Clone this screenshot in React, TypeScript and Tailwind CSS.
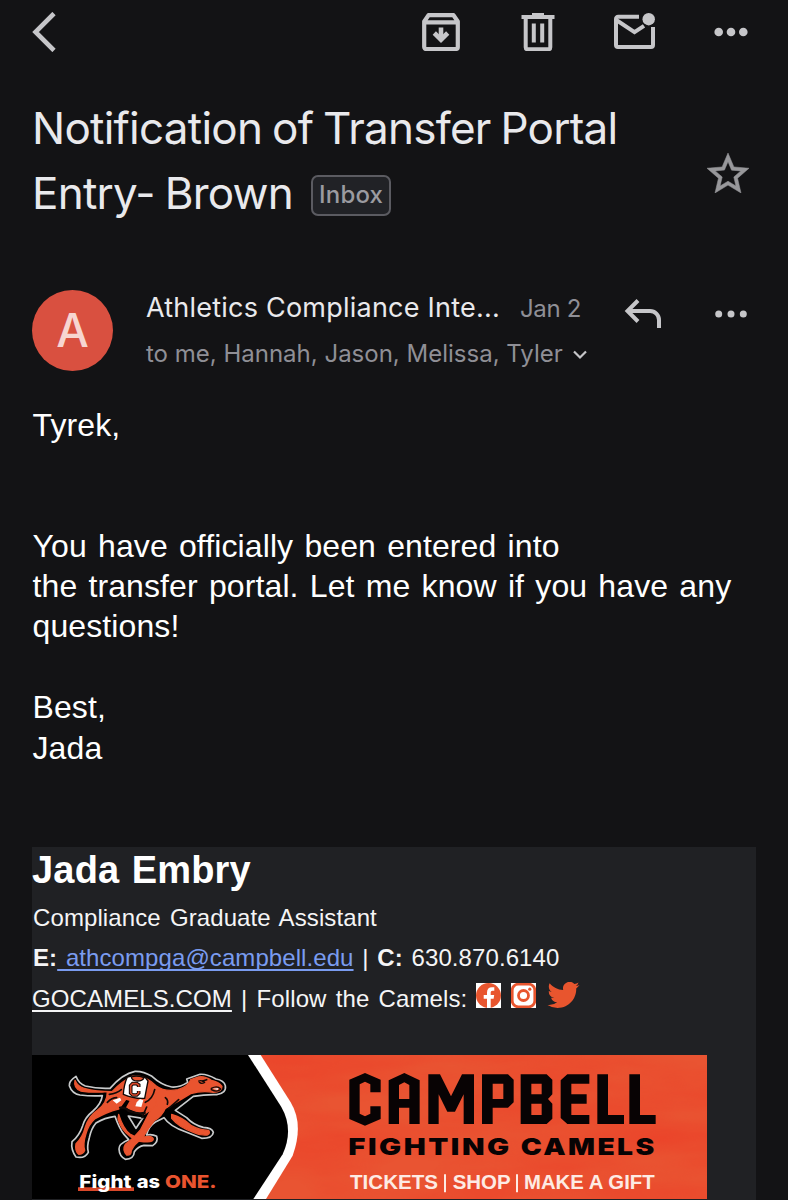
import type { ReactNode } from "react";

const HELVETICA = "font-['Liberation_Sans',Arial,sans-serif]";

const bodyLines = [
    "Tyrek,",
    "",
    "",
    "You have officially been entered into",
    "the transfer portal. Let me know if you have any",
    "questions!",
    "",
    "Best,",
    "Jada",
];

function Icon({ className, viewBox, children }: { className: string; viewBox: string; children: ReactNode }) {
    return (
        <svg className={`block shrink-0 ${className}`} viewBox={viewBox} fill="none" stroke="currentColor">
            {children}
        </svg>
    );
}

function Dots({ r }: { r: number }) {
    return (
        <Icon className="w-[34px] h-[10px]" viewBox="0 0 34 10">
            <g fill="currentColor" stroke="none">
                <circle cx="4.7" cy="5" r={r} />
                <circle cx="17" cy="5" r={r} />
                <circle cx="29.3" cy="5" r={r} />
            </g>
        </Icon>
    );
}

function Toolbar() {
    return (
        <header className="flex items-center h-16 pl-8 pr-[40px] text-[#c6c6c9]">
            <button aria-label="Back">
                <Icon className="w-6 h-10" viewBox="0 0 24 40">
                    <path d="M22 1.500 3.500 20 22 38.500" strokeWidth="4.600" />
                </Icon>
            </button>
            <div className="flex items-center ml-auto">
                <button aria-label="Archive">
                    <Icon className="w-[38px] h-[38px]" viewBox="0 0 38 38">
                        <path d="M2.200 8.500 6.500 2.200h25l4.300 6.300V34a2 2 0 0 1-2 2H4.200a2 2 0 0 1-2-2zM2 9.300h34" strokeWidth="4.200" strokeLinejoin="round" />
                        <path d="M19 14.500v11" strokeWidth="4.600" />
                        <path d="m12.300 20 6.700 6.700 6.700-6.700" strokeWidth="4.600" />
                    </Icon>
                </button>
                <button aria-label="Delete" className="ml-[61px]">
                    <Icon className="w-[34px] h-[38px]" viewBox="0 0 34 38">
                        <path d="M0.500 4h33M11 2h12" strokeWidth="4" />
                        <path d="M4.700 5v29.300a2 2 0 0 0 2 2h20.600a2 2 0 0 0 2-2V5" strokeWidth="4" />
                        <path d="M12.800 10.500v19M21.200 10.500v19" strokeWidth="4" />
                    </Icon>
                </button>
                <button aria-label="Mark unread" className="ml-[59px]">
                    <Icon className="w-[42px] h-[38px]" viewBox="0 2 42 38">
                        <path d="M25 5.800H4.200A2.200 2.200 0 0 0 2 8v26a2 2 0 0 0 2 2h33a2 2 0 0 0 2-2V16" strokeWidth="4" />
                        <path d="m3 9.500 17.500 11.700 9.500-6.400" strokeWidth="4" />
                        <circle cx="34.700" cy="8.200" r="6.200" fill="currentColor" stroke="none" />
                    </Icon>
                </button>
                <button aria-label="More" className="ml-[58px]">
                    <Dots r={4.3} />
                </button>
            </div>
        </header>
    );
}

function Subject() {
    return (
        <div className="flex items-center mt-8 pl-8 pr-[39px]">
            <h1 className="flex-1 font-[Inter,sans-serif] text-[44px] leading-[65px] tracking-[-0.75px] [word-spacing:-1.8px] text-[#e9e9ec] whitespace-nowrap">
                Notification of Transfer Portal
                <br />
                <span className="flex items-center">
                    Entry- Brown
                    <span className="flex items-center justify-center w-20 h-[41px] ml-[18px] mt-[3px] rounded-[7px] border-2 border-[#5b5b61] bg-[#212226] text-[24px] leading-none font-medium tracking-[0.2px] text-[#9b9ba0]">
                        Inbox
                    </span>
                </span>
            </h1>
            <button aria-label="Star" className="mt-[23px] text-[#98989b]">
                <Icon className="w-[42px] h-10" viewBox="2 2 20 19">
                    <path
                        d="M22 9.240l-7.190-.62L12 2 9.190 8.630 2 9.240l5.460 4.730L5.820 21 12 17.270 18.180 21l-1.630-7.030L22 9.240zM12 15.400l-3.760 2.270 1-4.280-3.320-2.880 4.380-.38L12 6.100l1.710 4.040 4.380.38-3.320 2.880 1 4.280L12 15.400z"
                        fill="currentColor"
                        stroke="currentColor"
                        strokeWidth="0.25"
                    />
                </Icon>
            </button>
        </div>
    );
}

function Sender() {
    return (
        <div className="flex h-[85px] mt-[62px] pl-8 pr-10 font-[Inter,sans-serif]">
            <div className="flex items-center justify-center size-[81px] mt-[1.500px] rounded-full bg-[#d95040] text-[#f7d5d1] text-[46px] leading-none font-medium">
                A
            </div>
            <div className="ml-[33px] pt-px whitespace-nowrap">
                <div className="flex items-baseline h-[38px] leading-[38px]">
                    <span className="text-[27px] tracking-[0.22px] text-[#e9e9ec]">Athletics Compliance Inte...</span>
                    <span className="ml-5 text-[24px] tracking-[-0.3px] text-[#8f8f96]">Jan 2</span>
                </div>
                <div className="flex items-center mt-2 h-[38px] leading-[38px] text-[24px] text-[#8f8f96]">
                    to me, Hannah, Jason, Melissa, Tyler
                    <Icon className="w-[14px] h-[10px] ml-[10px] mt-0.5 text-[#c6c6c9]" viewBox="0 0 14 10">
                        <path d="m1 1.500 6 6 6-6" strokeWidth="2.200" />
                    </Icon>
                </div>
            </div>
            <div className="flex items-center h-[51px] ml-auto text-[#c6c6c9]">
                <button aria-label="Reply">
                    <Icon className="w-[38px] h-[30px]" viewBox="0 0 38 30">
                        <path d="M14 1.500 3.500 12 14 22.500M4 12h22a9 9 0 0 1 9 9v8" strokeWidth="4" />
                    </Icon>
                </button>
                <button aria-label="More" className="ml-[52px]">
                    <Dots r={3.5} />
                </button>
            </div>
        </div>
    );
}

function SocialIcons() {
    return (
        <span className="flex items-center ml-[9px] mb-[7px]">
            <Icon className="w-[25px] h-[25px] bg-white" viewBox="0 0 25 25">
                <circle cx="12.500" cy="12.500" r="12.500" fill="#e8552e" stroke="none" />
                <path d="M11 25v-9.300H7.700V12H11V9.500c0-3.300 1.900-5.200 5-5.200h2.300v3.400h-1.700c-1.400 0-1.900.8-1.900 1.900V12h3.500l-.6 3.700h-2.900V25z" fill="#fff" stroke="none" />
            </Icon>
            <Icon className="w-[25px] h-[25px] ml-[10px] bg-white" viewBox="0 0 25 25">
                <rect x="1.200" y="1.200" width="22.600" height="22.600" rx="6" stroke="#e8552e" strokeWidth="2.800" />
                <circle cx="12.500" cy="12.500" r="5" stroke="#e8552e" strokeWidth="2.800" />
                <circle cx="18.800" cy="6.200" r="1.600" fill="#e8552e" stroke="none" />
            </Icon>
            <Icon className="w-[33px] h-[26px] ml-[11px] text-[#e8552e]" viewBox="0 2.3 24 19.5">
                <path
                    d="M23.950 4.570a10 10 0 0 1-2.820.77 4.960 4.960 0 0 0 2.160-2.720c-.95.550-2 .95-3.130 1.180a4.920 4.920 0 0 0-8.380 4.480C7.690 8.090 4.070 6.130 1.640 3.160a4.820 4.820 0 0 0-.67 2.480c0 1.710.87 3.210 2.190 4.100a4.900 4.900 0 0 1-2.230-.62v.06a4.920 4.920 0 0 0 3.950 4.830 5 5 0 0 1-2.210.08 4.940 4.940 0 0 0 4.600 3.420A9.870 9.870 0 0 1 0 19.540a13.990 13.990 0 0 0 7.550 2.210c9.050 0 14-7.500 14-13.980 0-.21 0-.42-.02-.63a9.940 9.940 0 0 0 2.460-2.550z"
                    fill="currentColor"
                    stroke="none"
                />
            </Icon>
        </span>
    );
}

function Camel() {
    return (
        <g strokeLinejoin="round" strokeLinecap="round">
            {/* silhouette */}
            <path
                d="M168 112Q146 126 148 140Q156 164 180 168Q214 172 247 170Q244 194 219 216Q194 236 188 260Q178 290 156 308Q152 332 168 354Q194 360 205 340Q200 322 208 296Q214 268 228 252Q254 236 285 232Q298 270 312 286L326 302Q296 314 297 330Q298 352 316 361Q342 360 343 338Q354 322 372 319L398 320Q416 308 410 292Q396 284 380 288Q384 264 408 248L432 236Q448 262 500 280L545 298Q578 298 580 280Q576 266 550 265Q520 258 500 236L466 214L520 172Q556 166 590 167Q620 162 616 140Q612 124 588 120Q560 104 540 106L500 120L503 130Q478 146 455 144Q424 138 396 112Q370 96 345 97Q308 104 270 148Q232 150 196 141Q176 134 168 112Z"
                fill="#000"
                stroke="#c9cbcc"
                strokeWidth="5"
            />
            <path d="M325 231L368 238L348 268Z" fill="#000" stroke="#c9cbcc" strokeWidth="5" />

            {/* far legs */}
            <g fill="#e9542f" stroke="#e9542f" strokeWidth="4">
                <path d="M296 226Q310 270 330 285Q352 300 372 294Q396 288 400 300Q398 310 376 308Q350 310 330 292Q302 270 294 240Z" />
                <path d="M455 226Q490 236 514 260Q540 274 566 274Q572 284 562 288Q540 290 520 280Q476 264 455 238Z" />

                {/* tail, body and neck */}
                <path d="M165 124Q160 146 182 156Q222 162 262 158Q262 192 232 214Q206 232 196 264Q188 296 168 314Q164 336 176 346Q190 346 194 334Q188 316 198 284Q206 256 224 240Q262 218 296 210L318 180L368 196Q358 222 392 214Q376 244 362 272Q342 298 316 316Q306 332 320 348Q334 350 334 334Q344 314 366 300Q384 268 404 244Q426 232 436 208Q474 188 512 164Q546 154 580 160Q606 160 606 142Q596 128 574 124Q552 110 536 114L512 122Q506 142 474 152Q434 160 408 140Q374 108 340 110Q304 128 276 158Q228 158 192 148Q172 142 165 124Z" />
                <path d="M340 170L320 206L372 226L410 200L400 150Z" />
            </g>

            {/* muscles and face */}
            <g fill="none" stroke="#120a08" strokeWidth="5">
                <path d="M268 166Q290 164 304 152M262 190Q276 176 290 176M376 190Q398 180 404 152M436 176Q446 184 442 196M380 204L366 236M446 208L476 182M560 122L548 126" />
                <path d="M300 206Q318 204 326 216Q350 226 374 222" strokeWidth="7" />
                <path d="M574 148Q592 138 602 150Q592 162 574 152Z" strokeWidth="4" />
                <path d="M536 126Q546 122 554 130Q544 136 538 130" strokeWidth="4" />
            </g>
            <path d="M578 149L595 147L593 153Z" fill="#eee" />

            {/* saddle blanket */}
            <path d="M322 114Q350 106 376 116L384 126L374 178Q342 180 310 166Q312 136 322 114Z" fill="#fff" stroke="#100806" strokeWidth="4" />
            <path d="M334 114Q350 108 372 116Q368 126 352 126Q336 126 334 114Z" fill="#e9542f" stroke="#100806" strokeWidth="4" />
            <path d="M278 184L300 176L304 184L290 194ZM350 190L360 180L370 184L364 204L346 202Z" fill="#fff" />
            <path d="M356 144V138L350 134H338L332 140V162L338 168H350L356 162V156" fill="none" stroke="#100806" strokeWidth="11" strokeLinejoin="miter" strokeLinecap="butt" />
            <path d="M356 143V138L350 134H338L332 140V162L338 168H350L356 162V157" fill="none" stroke="#d9482a" strokeWidth="5" strokeLinejoin="miter" strokeLinecap="butt" />
        </g>
    );
}

function Banner() {
    return (
        <svg className="block w-[675px] h-[144px]" viewBox="36 48 2025 432" fontFamily="'Liberation Sans', Arial, sans-serif" fontWeight="700">
            <defs>
                <filter id="grain" x="0" y="0" width="1" height="1" colorInterpolationFilters="sRGB">
                    <feTurbulence type="fractalNoise" baseFrequency="0.002 0.008" numOctaves="4" seed="8" />
                    <feColorMatrix values="0 0 0 0 0.93  0 0 0 0 0.2  0 0 0 0 0.13  1.600 0 0 0 -0.5" />
                </filter>
            </defs>
            <rect x="36" y="48" width="2025" height="432" fill="#e95432" />
            <rect x="700" y="48" width="1361" height="432" filter="url(#grain)" opacity="0.5" />
            <path d="M36 48H722L812 190Q852 256 818 350L738 480H36Z" fill="#fff" />
            <path d="M36 48H684L784 204Q822 270 788 346L700 480H36Z" fill="#000" />
            <Camel />

            {/* slogan */}
            <path d="M174 445H342V456H174Z" fill="#d9482a" />
            <g fontSize="54" fontFamily="Inter, sans-serif" fontWeight="800">
                <text x="178" y="447" fill="#fff" textLength="156" lengthAdjust="spacingAndGlyphs">Fight</text>
                <text x="350" y="447" fill="#fff" textLength="70" lengthAdjust="spacingAndGlyphs">as</text>
                <text x="435" y="447" fill="#e9542f" textLength="155" lengthAdjust="spacingAndGlyphs">ONE.</text>
            </g>

            {/* wordmark */}
            <g transform="translate(900 0)" fill="#080304" fillRule="evenodd">
                <path d="M88 122L135 102L182 122V160H151V136L135 128L119 136V224L135 232L151 224V202H182V240L135 260L88 240Z" />
                <path d="M206 255V124L253 102L299 124V255H268V206H237V255ZM237 180H268V138L253 130L237 138Z" />
                <path d="M325 255V106H360L393 172L426 106H462V255H431V166L405 218H382L356 166V255Z" />
                <path d="M486 255V106H564L581 122V190L564 206H518V255ZM518 134V180H550V134Z" />
                <path d="M602 255V106H680L697 122V166L684 180L697 194V239L680 255ZM634 134V166H665V134ZM634 194V228H665V194Z" />
                <path d="M722 124L742 106H808V134H754V166H800V194H754V228H808V255H742L722 237Z" />
                <path d="M832 106H864V228H912V255H832ZM928 106H960V228H1007V255H928Z" />
            </g>
            <g transform="translate(900 0)">
                <g fontSize="70" fontFamily="Inter, sans-serif" fontWeight="900" letterSpacing="6" fill="#080304">
                    <text x="85" y="348" textLength="490" lengthAdjust="spacingAndGlyphs">FIGHTING</text>
                    <text x="602" y="348" textLength="408" lengthAdjust="spacingAndGlyphs">CAMELS</text>
                </g>
                <g fontSize="60" fill="#fdebe4">
                    <text x="90" y="449" textLength="264" lengthAdjust="spacingAndGlyphs">TICKETS</text>
                    <text x="398" y="449" textLength="174" lengthAdjust="spacingAndGlyphs">SHOP</text>
                    <text x="612" y="449" textLength="392" lengthAdjust="spacingAndGlyphs">MAKE A GIFT</text>
                    <path d="M372 406h6v54h-6zM588 406h6v54h-6z" />
                </g>
            </g>
        </svg>
    );
}

function Signature() {
    return (
        <div className={`mt-[79px] mx-8 h-[353px] bg-[#202124] text-[#f5f5f6] whitespace-nowrap ${HELVETICA}`}>
            <div className="h-[51px] text-[38px] leading-[46px] font-bold tracking-[0.2px] [word-spacing:1.5px] text-white">Jada Embry</div>
            <div className="h-10 pl-px text-[24px] leading-10 tracking-[0.1px] [word-spacing:2.4px]">Compliance Graduate Assistant</div>
            <div className="h-10 pl-px text-[24px] leading-10 tracking-[0.08px] [word-spacing:2px]">
                <b>E:</b>
                <a className="text-[#7a9cf0] underline decoration-2 underline-offset-[3px] [text-decoration-skip-ink:none]">&nbsp;athcompga@campbell.edu</a> | <b>C:</b> 630.870.6140
            </div>
            <div className="flex items-center h-[41px] mb-9 text-[24px] leading-10 tracking-[0.1px] [word-spacing:2.4px]">
                <a className="underline decoration-2 underline-offset-[3px]">GOCAMELS.COM</a>
                <span className="whitespace-pre"> | Follow the Camels:</span>
                <SocialIcons />
            </div>
            <Banner />
        </div>
    );
}

export default function App() {
    return (
        <div className="w-[788px] h-[1200px] overflow-hidden bg-[#131315]">
            <Toolbar />
            <Subject />
            <Sender />
            <div className={`mt-[31.5px] pl-[32.5px] text-[32px] tracking-[0.1px] [word-spacing:2.2px] text-white whitespace-nowrap ${HELVETICA}`}>
                {bodyLines.map((line, i) => (
                    <p key={i} className="h-[40.4px] leading-[40.4px]">
                        {line}
                    </p>
                ))}
            </div>
            <Signature />
        </div>
    );
}
